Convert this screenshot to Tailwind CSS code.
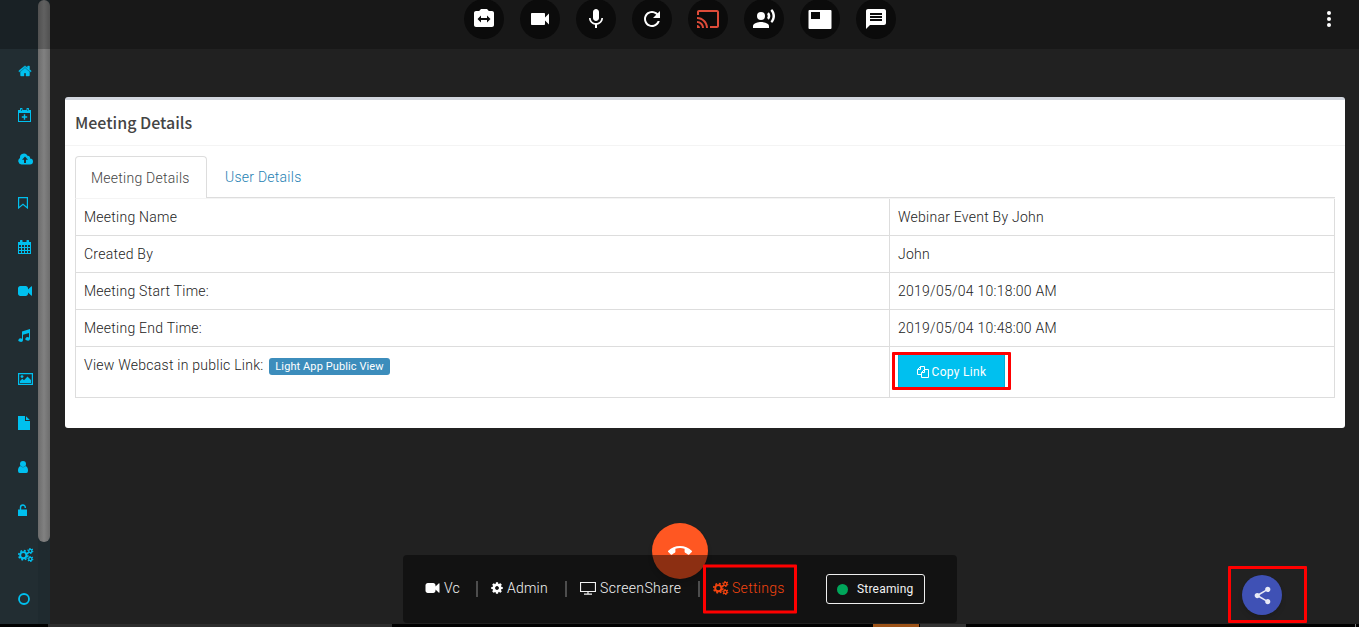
<!DOCTYPE html>
<html lang="en">
<head>
<meta charset="utf-8">
<title>Meeting Details</title>
<script src="https://cdn.jsdelivr.net/npm/@tailwindcss/browser@4"></script>
</head>
<body class="relative flex h-[627px] w-[1359px] flex-col overflow-hidden bg-[#212121] font-['Roboto','Liberation_Sans',sans-serif] text-sm text-[#222]">
<svg class="hidden">
  <symbol id="fa-video" viewBox="0 0 1792 1792"><path d="M1792 352v1088q0 42-39 59-13 5-25 5-27 0-45-19l-403-403v166q0 119-84.500 203.500t-203.500 84.500h-704q-119 0-203.500-84.500t-84.500-203.500v-704q0-119 84.500-203.500t203.500-84.500h704q119 0 203.500 84.500t84.500 203.500v165l403-402q18-19 45-19 12 0 25 5 39 17 39 59z"/></symbol>
  <symbol id="cogs" viewBox="0 0 16 14">
    <g fill="none" stroke="currentColor">
      <circle cx="5.300" cy="7.200" r="3.100" stroke-width="1.900"/>
      <circle cx="5.300" cy="7.200" r="4.600" stroke-width="1.600" stroke-dasharray="1.900 1.712"/>
      <circle cx="12.300" cy="3" r="1.600" stroke-width="1.300"/>
      <circle cx="12.300" cy="3" r="2.500" stroke-width="1.100" stroke-dasharray="1.300 1.318"/>
      <circle cx="12.300" cy="11" r="1.600" stroke-width="1.300"/>
      <circle cx="12.300" cy="11" r="2.500" stroke-width="1.100" stroke-dasharray="1.300 1.318"/>
    </g>
  </symbol>
</svg>

<div class="flex h-[624px] shrink-0">
  <!-- sidebar -->
  <nav class="flex w-[38px] flex-col bg-[#222d32] pt-[49px] pl-[18px] text-[#00c0ef] [&>a]:flex [&>a]:h-11 [&>a]:shrink-0 [&>a]:items-center [&_svg]:shrink-0">
    <a><svg width="14" height="14" viewBox="64 0 1664 1792" fill="currentColor"><path d="M1472 992v480q0 26-19 45t-45 19h-384v-384h-256v384h-384q-26 0-45-19t-19-45v-480q0-1 .5-3t.5-3l575-474 575 474q1 2 1 6zm223-69l-62 74q-8 9-21 11h-3q-13 0-21-7l-692-577-692 577q-12 8-24 7-13-2-21-11l-62-74q-8-10-7-23.500t11-21.500l719-599q32-26 76-26t76 26l244 204v-195q0-14 9-23t23-9h192q14 0 23 9t9 23v408l219 182q10 8 11 21.500t-7 23.500z" stroke="currentColor" stroke-width="50"/></svg></a>
    <a><svg width="13" height="14" viewBox="0 0 13 14"><path fill="currentColor" fill-rule="evenodd" d="M0 2h2V.5Q2 0 2.500 0h1.500q.5 0 .5.500V2h4V.5Q8.500 0 9 0h1.500q.5 0 .5.500V2h2v12H0zM1 5v8h11V5zM3 1v2h.6V1zM9.500 1v2h.6V1zM5.800 6.300h1.400v2h2v1.400h-2v2H5.800v-2h-2V8.300h2z"/></svg></a>
    <a><svg width="15" height="12" viewBox="0 0 15 12"><path fill="currentColor" fill-rule="evenodd" d="M3.500 11.500A3.500 3.500 0 0 1 2 5 4 4 0 0 1 9.500 2.700 2.200 2.200 0 0 1 12 5.500a3 3 0 0 1 0 6zM7 3.500L4 6.700h2V10h2V6.700h2z"/></svg></a>
    <a><svg width="10" height="12" viewBox="0 0 10 12"><path fill="none" stroke="currentColor" stroke-width="1.200" d="M.6.600h8.800v10.300L5 7.300.6 10.900z"/></svg></a>
    <a><svg width="13" height="14" viewBox="0 0 13 14"><path fill="currentColor" fill-rule="evenodd" d="M0 2h2V.5Q2 0 2.500 0h1.500q.5 0 .5.500V2h4V.5Q8.500 0 9 0h1.500q.5 0 .5.500V2h2v12H0zM1 5v2h2V5zM4 5v2h2V5zM7 5v2h2V5zM10 5v2h2V5zM1 8v2h2V8zM4 8v2h2V8zM7 8v2h2V8zM10 8v2h2V8zM1 11v2h2v-2zM4 11v2h2v-2zM7 11v2h2v-2zM10 11v2h2v-2z"/></svg></a>
    <a><svg width="14" height="14" fill="currentColor"><use href="#fa-video"/></svg></a>
    <a><svg width="12" height="13" viewBox="0 0 12 13" fill="currentColor"><path d="M4 2.500L12 0v10a2.300 1.700 0 1 1-1-1.500V4L5 5.800V11.300a2.300 1.700 0 1 1-1-1.500z"/></svg></a>
    <a><svg width="15" height="12" viewBox="0 0 15 12"><path d="M.6.600h13.800v10.800H.6z" fill="none" stroke="currentColor" stroke-width="1.200"/><path fill="currentColor" d="M2 10V8l2.300-2.200L6 7.300 9.500 3.500 13 7v3z"/><circle cx="4" cy="3.600" r="1.400" fill="currentColor"/></svg></a>
    <a><svg width="12" height="14" viewBox="0 0 12 14" fill="currentColor"><path d="M0 0h7v5h5v9H0zM8 .2L11.800 4H8z"/></svg></a>
    <a><svg width="10" height="12" viewBox="0 0 10 12" fill="currentColor"><circle cx="5" cy="3" r="3"/><path d="M2.300 5Q5 7.500 7.700 5 10 6 10 9.700 10 12 8.300 12H1.700Q0 12 0 9.700 0 6 2.300 5z"/></svg></a>
    <a><svg class="-mt-0.5" width="10" height="12" viewBox="0 0 10 12"><path fill="currentColor" d="M0 5.500h9V12H0z"/><path d="M2.500 6V3.400a2.400 2.400 0 0 1 4.800 0V4" fill="none" stroke="currentColor" stroke-width="1.400"/></svg></a>
    <a><svg width="16" height="14"><use href="#cogs"/></svg></a>
    <a><svg width="12" height="12" viewBox="0 0 12 12"><circle cx="6" cy="6" r="5" fill="none" stroke="currentColor" stroke-width="1.800"/></svg></a>
  </nav>
  <!-- scrollbar -->
  <div class="w-3 shrink-0 bg-[#1f2a2f]">
    <div class="h-[542px] rounded-md bg-linear-to-r from-[#6c6c6c] via-[#818181] to-[#6c6c6c]"></div>
  </div>

  <main class="flex grow flex-col pt-[97px] pr-[14px] pl-[15px]">
    <section class="h-[331px] rounded-[3px] border-t-[3px] border-[#d2d6de] bg-white">
      <header class="flex h-[46px] items-center border-b border-[#f4f4f4] px-[10px] pb-0.5">
        <h3 class="font-['Noto_Sans_CJK_SC',sans-serif] text-base leading-none font-medium text-[#444]">Meeting Details</h3>
      </header>
      <div class="px-[10px] pt-[10px] font-light tracking-[0.25px]">
        <div class="flex h-[42px] border-b border-[#ddd]">
          <a class="-mb-px flex w-[132px] items-center rounded-t border border-b-0 border-[#ddd] bg-white pl-[15px] text-[#444]">Meeting Details</a>
          <a class="flex items-center pl-[18px] text-[#247fb3]">User Details</a>
        </div>
        <div class="grid grid-cols-[814px_1fr] grid-rows-[37px_37px_37px_37px_51px] border-t border-l border-t-[#f4f4f4] border-l-[#ddd] [&>div]:border-r [&>div]:border-b [&>div]:border-[#ddd] [&>div]:px-2 [&>div]:pt-2 [&>div]:leading-5">
          <div>Meeting Name</div><div>Webinar Event By John</div>
          <div>Created By</div><div>John</div>
          <div>Meeting Start Time:</div><div>2019/05/04 10:18:00 AM</div>
          <div>Meeting End Time:</div><div>2019/05/04 10:48:00 AM</div>
          <div class="flex items-start"><span class="w-[185px] whitespace-nowrap">View Webcast in public Link:</span><span class="mt-[3px] flex h-[17px] w-[121px] items-center justify-center rounded-[3px] bg-[#3c8dbc] text-[11px] font-normal tracking-[0.1px] text-white">Light App Public View</span></div>
          <div>
            <div class="relative flex h-8 w-[107px] items-center justify-center gap-[3px] border-x border-[#00acd6] bg-[#00c0ef] pt-px text-xs font-normal tracking-[0.3px] text-white">
              <svg width="12" height="12" viewBox="0 0 12 12" fill="none" stroke="currentColor"><path d="M4.500 8.500h-4v-5l3-3h4v3M3.500.5v3h-3M7.500 3.500h4v8h-7v-5zM7.500 3.500v3h-3"/></svg>
              <span>Copy Link</span>
              <div class="absolute -top-[3px] -left-[7px] h-[38px] w-[119px] rounded-[1px] border-[3px] border-[#f00]"></div>
            </div>
          </div>
        </div>
      </div>
    </section>
  </main>
</div>

<!-- bottom edge strip -->
<div class="flex h-[3px] bg-black">
  <i class="ml-12 w-[344px] bg-[#2d2d2d]"></i><i class="ml-[481px] w-[46px] bg-[#9c5217]"></i><i class="ml-px w-[46px] bg-[#333]"></i><i class="ml-[389px] w-px bg-[#777]"></i>
</div>

<!-- top toolbar overlay -->
<div class="absolute inset-x-0 top-0 flex h-[49px] justify-center bg-black/25 text-white">
  <div class="-mt-px flex gap-4 [&>span]:flex [&>span]:size-10 [&>span]:items-center [&>span]:justify-center [&>span]:rounded-full [&>span]:bg-[#0b0b0b] [&_svg]:size-6 [&_svg]:fill-current">
    <span><svg viewBox="0 0 24 24"><path d="M20 4h-3.170L15 2H9L7.170 4H4c-1.100 0-2 .9-2 2v12c0 1.100.9 2 2 2h16c1.100 0 2-.9 2-2V6c0-1.100-.9-2-2-2zm-5 11.500V13H9v2.500L5.500 12 9 8.500V11h6V8.500l3.500 3.500-3.500 3.500z"/></svg></span>
    <span><svg viewBox="0 0 24 24"><path d="M17 10.500V7c0-.55-.45-1-1-1H4c-.55 0-1 .45-1 1v10c0 .55.45 1 1 1h12c.55 0 1-.45 1-1v-3.500l4 4v-11l-4 4z"/></svg></span>
    <span><svg viewBox="0 0 24 24"><path d="M12 14c1.660 0 2.990-1.340 2.990-3L15 5c0-1.660-1.340-3-3-3S9 3.340 9 5v6c0 1.660 1.340 3 3 3zm5.300-3c0 3-2.540 5.100-5.300 5.100S6.700 14 6.700 11H5c0 3.410 2.720 6.230 6 6.720V21h2v-3.280c3.280-.48 6-3.300 6-6.720h-1.700z"/></svg></span>
    <span><svg viewBox="0 0 24 24"><path d="M17.650 6.350C16.200 4.900 14.210 4 12 4c-4.420 0-7.990 3.580-7.990 8s3.570 8 7.990 8c3.730 0 6.840-2.550 7.730-6h-2.080c-.82 2.330-3.040 4-5.650 4-3.310 0-6-2.690-6-6s2.690-6 6-6c1.660 0 3.140.69 4.220 1.780L13 11h7V4l-2.350 2.350z"/></svg></span>
    <span class="text-[#dd4b39]"><svg viewBox="0 0 24 24"><path d="M21 3H3c-1.100 0-2 .9-2 2v3h2V5h18v14h-7v2h7c1.100 0 2-.9 2-2V5c0-1.100-.9-2-2-2zM1 18v3h3c0-1.660-1.340-3-3-3zm0-4v2c2.760 0 5 2.240 5 5h2c0-3.870-3.130-7-7-7zm0-4v2c4.970 0 9 4.030 9 9h2c0-6.080-4.930-11-11-11z"/></svg></span>
    <span><svg viewBox="0 0 24 24"><circle cx="9" cy="9" r="4"/><path d="M9 15c-2.670 0-8 1.340-8 4v2h16v-2c0-2.660-5.330-4-8-4zm7.760-9.640l-1.680 1.690c.84 1.180.84 2.710 0 3.890l1.680 1.690c2.020-2.020 2.020-5.070 0-7.270zM20.070 2l-1.630 1.630c2.770 3.020 2.770 7.560 0 10.740L20.070 16c3.900-3.890 3.910-9.950 0-14z"/></svg></span>
    <span><svg viewBox="0 0 24 24"><path d="M22.500 3h-21Q.5 3 .5 4v17q0 1 1 1h21q1 0 1-1V4q0-1-1-1zM12 12H3V5h9v7z"/></svg></span>
    <span><svg viewBox="0 0 24 24"><path d="M20 2H4c-1.100 0-1.990.9-1.990 2L2 22l4-4h14c1.100 0 2-.9 2-2V4c0-1.100-.9-2-2-2zm-2 12H6v-2h12v2zm0-3H6V9h12v2zm0-3H6V6h12v2z"/></svg></span>
  </div>
  <svg class="absolute top-[7px] right-[18px] size-6 fill-white" viewBox="0 0 24 24"><circle cx="12" cy="6" r="2"/><circle cx="12" cy="12" r="2"/><circle cx="12" cy="18" r="2"/></svg>
</div>

<!-- hang-up button, partly under the control bar -->
<div class="absolute top-[523px] left-[652px] flex size-14 items-center justify-center rounded-full bg-[#ff5722] text-white shadow-md">
  <svg class="size-6 fill-current" viewBox="0 0 24 24"><path d="M12 9c-1.600 0-3.150.25-4.600.72v3.100c0 .39-.23.74-.56.9-.98.49-1.870 1.120-2.660 1.850-.18.18-.43.28-.7.280-.28 0-.53-.11-.71-.29L.29 13.080c-.18-.17-.29-.42-.29-.7 0-.28.11-.53.29-.71C3.340 8.780 7.460 7 12 7s8.660 1.780 11.710 4.670c.18.18.29.43.29.710 0 .28-.11.53-.29.710l-2.480 2.480c-.18.18-.43.290-.71.290-.27 0-.52-.11-.7-.28-.79-.74-1.690-1.360-2.670-1.850-.33-.16-.56-.5-.56-.9v-3.100C15.150 9.250 13.600 9 12 9z"/></svg>
</div>
<div class="absolute top-[555px] left-[403px] flex h-[68px] w-[554px] items-center rounded bg-black/45 pl-[22px] font-light tracking-[0.2px] text-[#f2f2f2]">
  <a class="-mt-0.5 flex w-[51px] items-center gap-1"><svg width="15" height="14" class="fill-white"><use href="#fa-video"/></svg>Vc</a>
  <i class="h-4 w-0.5 bg-[#4d4d4d]"></i>
  <a class="-mt-0.5 ml-[13px] flex w-[74px] items-center gap-1"><svg width="12" height="12" viewBox="96 96 1600 1600" class="fill-white"><path d="M1152 896q0-106-75-181t-181-75-181 75-75 181 75 181 181 75 181-75 75-181zm512-109v222q0 12-8 23t-20 13l-185 28q-19 54-39 91 35 50 107 138 10 12 10 25t-9 23q-27 37-99 108t-94 71q-12 0-26-9l-138-108q-44 23-91 38-16 136-29 186-7 28-36 28h-222q-14 0-24.500-8.500t-11.500-21.500l-28-184q-49-16-90-37l-141 107q-10 9-25 9-14 0-25-11-126-114-165-168-7-10-7-23 0-12 8-23 15-21 51-66.500t54-70.500q-27-50-41-99l-183-27q-13-2-21-12.500t-8-23.500v-222q0-12 8-23t19-13l186-28q14-46 39-92-40-57-107-138-10-12-10-24 0-10 9-23 26-36 98.500-107.500t94.500-71.500q13 0 26 10l138 107q44-23 91-38 16-136 29-186 7-28 36-28h222q14 0 24.500 8.500t11.500 21.500l28 184q49 16 90 37l142-107q9-9 24-9 13 0 25 10 129 119 165 170 7 8 7 22 0 12-8 23-15 21-51 66.500t-54 70.500q26 50 41 98l183 28q13 2 21 12.500t8 23.500z"/></svg>Admin</a>
  <i class="h-4 w-0.5 bg-[#4d4d4d]"></i>
  <a class="-mt-0.5 ml-[13px] flex w-[118px] items-center gap-1 tracking-[0.35px]"><svg width="16" height="13" viewBox="0 0 16 13" fill="none" stroke="currentColor"><path d="M.5.500h15v9H.5zM8 10v2M4 12.200h8" stroke-width="1.200"/></svg>ScreenShare</a>
  <i class="h-4 w-0.5 bg-[#4d4d4d]"></i>
  <a class="relative ml-[13px] flex w-[113px] items-center gap-[3px] pb-0.5 tracking-[0.3px] text-[#f4440f]"><svg width="16" height="14"><use href="#cogs"/></svg>Settings
    <span class="absolute top-1/2 -left-[10px] h-[49px] w-[94px] -translate-y-1/2 rounded-[1px] border-[3px] border-[#f00]"></span></a>
  <a class="flex h-[30px] w-[99px] items-center rounded-[3px] border border-[#eee] pl-[10px] text-xs font-normal"><i class="mr-[9px] size-[11px] rounded-full bg-[#00a65a]"></i><span>Streaming</span></a>
</div>

<!-- share button -->
<div class="absolute top-[566px] left-[1228px] h-[57px] w-[79px] rounded-[1px] border-[3px] border-[#f00]">
  <div class="mt-1.5 ml-[11px] flex size-10 items-center justify-center rounded-full bg-[#3f51b5] shadow-md">
    <svg width="21" height="21" class="fill-[#e8eaf6]" viewBox="0 0 24 24"><path d="M18 16.080c-.76 0-1.440.3-1.960.770L8.910 12.700c.05-.23.090-.46.090-.7s-.04-.47-.09-.7l7.050-4.110c.54.5 1.250.810 2.040.810 1.660 0 3-1.340 3-3s-1.340-3-3-3-3 1.340-3 3c0 .24.04.47.090.7L8.040 9.810C7.500 9.310 6.790 9 6 9c-1.660 0-3 1.340-3 3s1.340 3 3 3c.79 0 1.500-.31 2.040-.81l7.120 4.160c-.05.21-.08.43-.08.650 0 1.610 1.310 2.920 2.920 2.920 1.610 0 2.920-1.310 2.920-2.920s-1.310-2.920-2.920-2.920z"/></svg>
  </div>
</div>
</body>
</html>
